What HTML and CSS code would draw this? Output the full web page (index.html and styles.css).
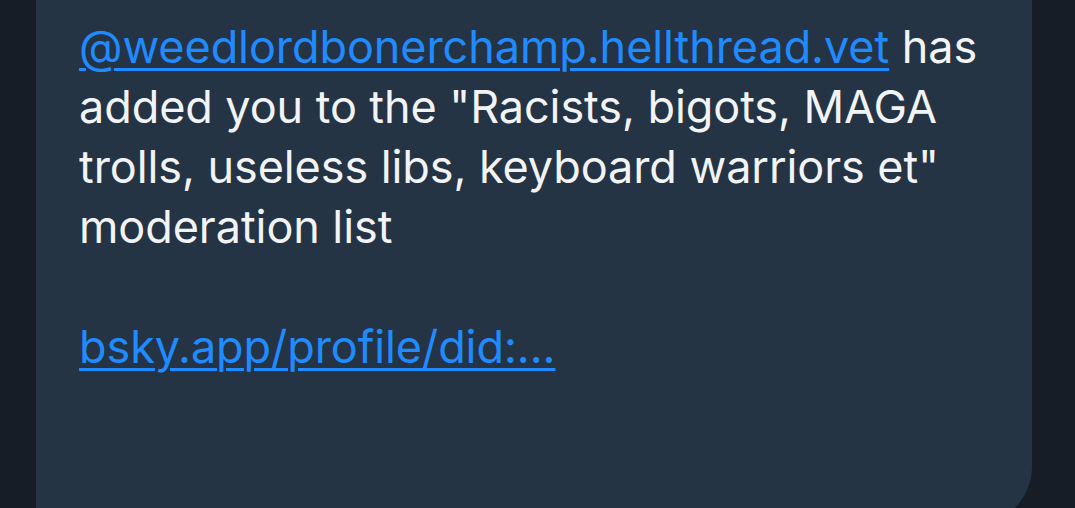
FILE: index.html
```html
<!DOCTYPE html>
<html lang="en">
<head>
    <meta charset="UTF-8">
    <meta name="viewport" content="width=device-width, initial-scale=1">
    <title>Message</title>
    <link rel="stylesheet" href="styles.css">
</head>
<body>
    <div class="bubble">
        <p class="message">
            <a href="#">@weedlordbonerchamp.hellthread.vet</a> has added you to the "Racists, bigots, MAGA trolls, useless libs, keyboard warriors et" moderation list
        </p>
        <p class="message spaced">
            <a href="#">bsky.app/profile/did:...</a>
        </p>
    </div>
</body>
</html>
```

FILE: styles.css
```css
html, * {
    box-sizing: border-box;
    margin: 0;
    padding: 0;
}

body {
    background: #161d26;
    height: 508px;
    overflow: hidden;
    font-family: 'Inter', 'Noto Sans', sans-serif;
}

.bubble {
    margin-left: 36px;
    width: 996px;
    min-height: 526px;
    padding: 17px 43px 0 43px;
    background: #253445;
    border-radius: 0 0 60px 0;
}

.message {
    font-size: 45px;
    line-height: 60px;
    letter-spacing: -0.08px;
    color: #f1f3f5;
}

.spaced {
    margin-top: 60px;
}

.message a {
    color: #208bfe;
    text-decoration: underline;
    text-decoration-thickness: 3px;
    text-underline-offset: 5px;
}
```
